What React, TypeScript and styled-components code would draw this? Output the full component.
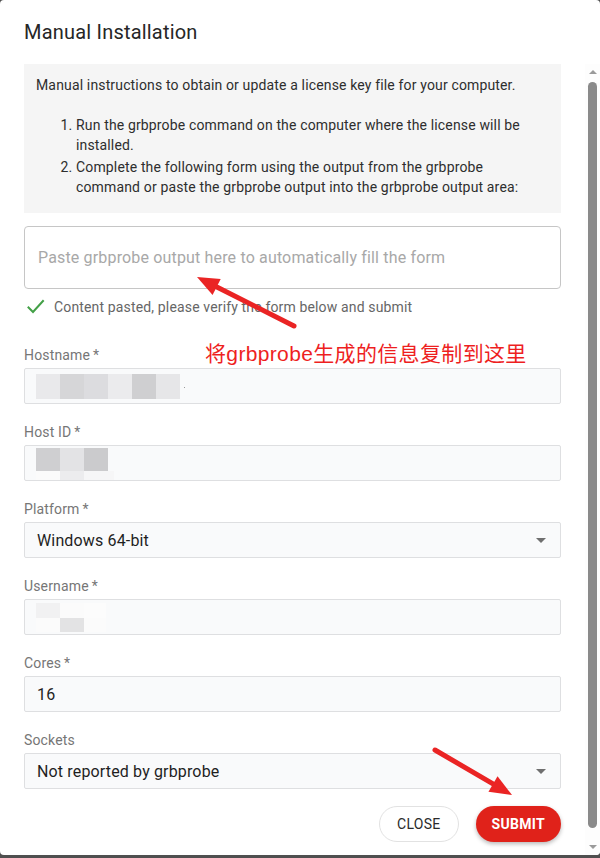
import React from "react";
import styled, { createGlobalStyle } from "styled-components";

const GlobalStyle = createGlobalStyle`
  html, body { margin: 0; padding: 0; }
  body {
    background: #4f4f4f;
    font-family: Roboto, "Noto Sans", "Liberation Sans", sans-serif;
    letter-spacing: 0.15px;
    -webkit-font-smoothing: antialiased;
  }
  * { box-sizing: border-box; }
`;

const Dialog = styled.div`
  position: relative;
  width: 600px;
  height: 855px;
  background: #ffffff;
  border-radius: 4px;
  display: flex;
  flex-direction: column;
  overflow: hidden;
`;

const Title = styled.h2`
  margin: 0;
  padding: 16px 24px;
  height: 64px;
  font-size: 20px;
  line-height: 32px;
  font-weight: 400;
  letter-spacing: 0.2px;
  color: #262626;
`;

const Body = styled.div`
  flex: 1;
  min-height: 0;
  display: flex;
`;

const Content = styled.div`
  flex: 1;
  min-width: 0;
  padding: 0 24px;
  overflow: hidden;
`;

const Rail = styled.div`
  width: 15px;
  display: flex;
  flex-direction: column;
  align-items: center;
  background: #fdfdfd;
`;

const RailButton = styled.div`
  height: 16px;
  width: 15px;
  display: flex;
  align-items: center;
  justify-content: center;
`;

const Tri = styled.div<{ $up?: boolean }>`
  width: 0;
  height: 0;
  border-left: 4px solid transparent;
  border-right: 4px solid transparent;
  ${(p) =>
    p.$up
      ? "border-bottom: 4px solid #9a9a9a;"
      : "border-top: 4px solid #9a9a9a;"}
`;

const Thumb = styled.div`
  flex: 1;
  width: 9px;
  margin: 2px 0 11px;
  border-radius: 5px;
  background: #8a8a8a;
`;

const InfoBox = styled.div`
  background: #f5f5f5;
  padding: 11px 12px 16px;
  font-size: 14px;
  line-height: 20px;
  color: #2e2e2e;

  p {
    margin: 0 0 20px;
  }
  ol {
    margin: 0;
    padding-left: 40px;
  }
  li {
    margin-bottom: 2px;
  }
  li:last-child {
    margin-bottom: 0;
  }
`;

const PasteArea = styled.textarea`
  display: block;
  width: 100%;
  height: 63px;
  margin-top: 13px;
  padding: 19px 13px 0;
  border: 1px solid #c6c6c6;
  border-radius: 4px;
  resize: none;
  outline: none;
  font-family: Roboto, sans-serif;
  font-size: 16px;
  line-height: 24px;
  letter-spacing: 0.16px;
  color: #212121;
  background: #fff;
  &::placeholder {
    color: #a8a8a8;
  }
`;

const Hint = styled.div`
  margin-top: 8px;
  height: 20px;
  display: flex;
  align-items: center;
  gap: 9px;
  padding-left: 3px;
  font-size: 14px;
  line-height: 20px;
  color: #666666;
`;

const Fields = styled.div`
  margin-top: 28px;
  display: flex;
  flex-direction: column;
  gap: 18px;
`;

const Field = styled.div`
  display: flex;
  flex-direction: column;
`;

const Label = styled.label`
  font-size: 14px;
  line-height: 20px;
  color: #767676;
`;

const ValueBox = styled.div`
  position: relative;
  margin-top: 3px;
  height: 36px;
  border: 1px solid #dedfe1;
  border-radius: 2px;
  background: #f9fafb;
  padding: 0 12px 0 12px;
  display: flex;
  align-items: center;
  font-size: 16px;
  color: #1f1f1f;
  overflow: hidden;
`;

const RedactBox = styled(ValueBox)`
  align-items: flex-start;
  padding-left: 11px;
`;

const Mosaic = styled.div<{ $top: number }>`
  margin-top: ${(p) => p.$top}px;
  display: flex;
  flex-direction: column;
`;

const MosaicRow = styled.div<{ $h: number }>`
  display: flex;
  height: ${(p) => p.$h}px;
`;

const MosaicCell = styled.div<{ $c: string; $w?: number }>`
  width: ${(p) => p.$w ?? 24}px;
  height: 100%;
  background: ${(p) => p.$c};
`;

const Dot = styled.span`
  align-self: flex-start;
  margin-top: 18px;
  margin-left: 4px;
  width: 1px;
  height: 1px;
  background: #9a9a9a;
`;

const Caret = styled.svg`
  position: absolute;
  right: 7px;
  top: 50%;
  transform: translateY(-50%);
  width: 24px;
  height: 24px;
  fill: #6f6f6f;
`;

const Actions = styled.div`
  margin-top: 17px;
  display: flex;
  justify-content: flex-end;
  gap: 17px;
`;

const Button = styled.button<{ $primary?: boolean }>`
  height: 36px;
  border-radius: 18px;
  font-family: Roboto, sans-serif;
  font-size: 14px;
  letter-spacing: 0.3px;
  cursor: pointer;
  ${(p) =>
    p.$primary
      ? `
    padding: 0 16px;
    border: none;
    background: #e0221a;
    color: #ffffff;
    font-weight: 700;
    box-shadow: 0 2px 4px rgba(0,0,0,0.28);
  `
      : `
    padding: 0 17px;
    border: 1px solid #e2e2e2;
    background: #ffffff;
    color: #2b2b2b;
    font-weight: 400;
  `}
`;

const Overlay = styled.svg`
  position: absolute;
  left: 0;
  top: 0;
  width: 600px;
  height: 855px;
  pointer-events: none;
`;

const Note = styled.div`
  position: absolute;
  left: 205px;
  top: 342px;
  font-family: "Liberation Sans", "Noto Sans CJK SC", sans-serif;
  font-size: 21px;
  line-height: 24px;
  letter-spacing: 0.35px;
  color: #ee1f1f;
  white-space: nowrap;
  pointer-events: none;
`;

type Cell = { c: string; w?: number };
type Row = { h: number; cells: Cell[] };

const hostnameMosaic: Row[] = [
  {
    h: 25,
    cells: [
      { c: "#e9e9eb" },
      { c: "#d6d6d8" },
      { c: "#dcdcdf" },
      { c: "#ebebed" },
      { c: "#cfcfd1" },
      { c: "#e6e6e8" },
    ],
  },
];

const hostIdMosaic: Row[] = [
  {
    h: 23,
    cells: [{ c: "#cfcfd1" }, { c: "#e3e3e5" }, { c: "#cbcbcd" }],
  },
  {
    h: 10,
    cells: [{ c: "#fbfbfb" }, { c: "#ececee" }, { c: "#f6f6f7", w: 30 }],
  },
];

const usernameMosaic: Row[] = [
  {
    h: 15,
    cells: [{ c: "#f1f1f2" }, { c: "#fbfbfb" }, { c: "#fcfcfc", w: 22 }],
  },
  {
    h: 14,
    cells: [{ c: "#fbfbfb" }, { c: "#e3e3e4" }, { c: "#fbfbfb", w: 22 }],
  },
];

function Redacted({ rows, top }: { rows: Row[]; top: number }) {
  return (
    <Mosaic $top={top}>
      {rows.map((r, i) => (
        <MosaicRow key={i} $h={r.h}>
          {r.cells.map((c, j) => (
            <MosaicCell key={j} $c={c.c} $w={c.w} />
          ))}
        </MosaicRow>
      ))}
    </Mosaic>
  );
}

function DropCaret() {
  return (
    <Caret viewBox="0 0 24 24">
      <path d="M7 10l5 5 5-5z" />
    </Caret>
  );
}

function CheckIcon() {
  return (
    <svg width="18" height="16" viewBox="0 0 18 16">
      <polyline
        points="1.5,8.5 6,13 16,2"
        fill="none"
        stroke="#43a047"
        strokeWidth="2"
        strokeLinecap="square"
      />
    </svg>
  );
}

function arrow(tx: number, ty: number, hx: number, hy: number, L = 22, W = 9) {
  const dx = hx - tx;
  const dy = hy - ty;
  const len = Math.hypot(dx, dy);
  const ux = dx / len;
  const uy = dy / len;
  const bx = hx - ux * L;
  const by = hy - uy * L;
  const nx = -uy;
  const ny = ux;
  return {
    line: { x1: tx, y1: ty, x2: bx + ux * 2, y2: by + uy * 2 },
    head: `${hx},${hy} ${bx + nx * W},${by + ny * W} ${bx - nx * W},${by - ny * W}`,
  };
}

export default function App() {
  const a1 = arrow(294, 326, 197, 277);
  const a2 = arrow(435, 750, 512, 795);
  return (
    <>
      <GlobalStyle />
      <Dialog>
        <Title>Manual Installation</Title>
        <Body>
          <Content>
            <InfoBox>
              <p>
                Manual instructions to obtain or update a license key file for
                your computer.
              </p>
              <ol>
                <li>
                  Run the grbprobe command on the computer where the license
                  will be installed.
                </li>
                <li>
                  Complete the following form using the output from the
                  grbprobe command or paste the grbprobe output into the
                  grbprobe output area:
                </li>
              </ol>
            </InfoBox>
            <PasteArea placeholder="Paste grbprobe output here to automatically fill the form" />
            <Hint>
              <CheckIcon />
              <span>Content pasted, please verify the form below and submit</span>
            </Hint>
            <Fields>
              <Field>
                <Label>Hostname&thinsp;*</Label>
                <RedactBox>
                  <Redacted rows={hostnameMosaic} top={5} />
                  <Dot />
                </RedactBox>
              </Field>
              <Field>
                <Label>Host ID&thinsp;*</Label>
                <RedactBox>
                  <Redacted rows={hostIdMosaic} top={2} />
                </RedactBox>
              </Field>
              <Field>
                <Label>Platform&thinsp;*</Label>
                <ValueBox>
                  Windows 64-bit
                  <DropCaret />
                </ValueBox>
              </Field>
              <Field>
                <Label>Username&thinsp;*</Label>
                <RedactBox>
                  <Redacted rows={usernameMosaic} top={3} />
                </RedactBox>
              </Field>
              <Field>
                <Label>Cores&thinsp;*</Label>
                <ValueBox>16</ValueBox>
              </Field>
              <Field>
                <Label>Sockets</Label>
                <ValueBox>
                  Not reported by grbprobe
                  <DropCaret />
                </ValueBox>
              </Field>
            </Fields>
            <Actions>
              <Button>CLOSE</Button>
              <Button $primary>SUBMIT</Button>
            </Actions>
          </Content>
          <Rail>
            <RailButton>
              <Tri $up />
            </RailButton>
            <Thumb />
            <RailButton>
              <Tri />
            </RailButton>
          </Rail>
        </Body>
        <Note>将grbprobe生成的信息复制到这里</Note>
        <Overlay viewBox="0 0 600 855">
          {[a1, a2].map((a, i) => (
            <g key={i}>
              <line
                {...a.line}
                stroke="#ea2424"
                strokeWidth="5"
                strokeLinecap="round"
              />
              <polygon points={a.head} fill="#ea2424" />
            </g>
          ))}
        </Overlay>
      </Dialog>
    </>
  );
}
